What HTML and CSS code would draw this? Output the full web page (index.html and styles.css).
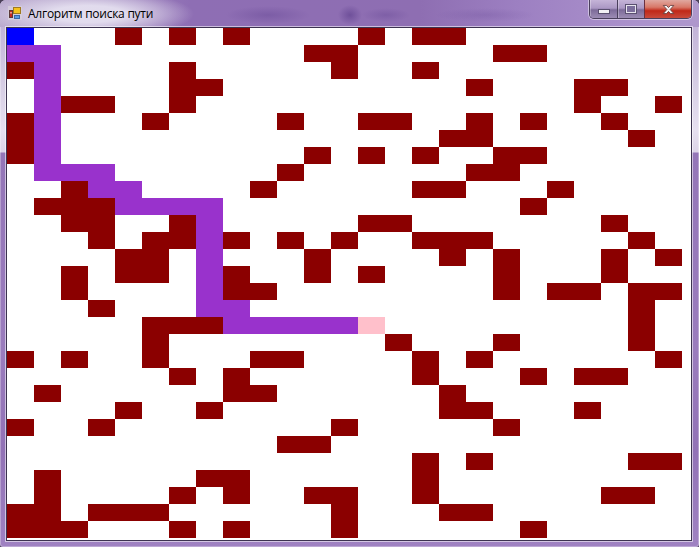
FILE: index.html
```html
<!DOCTYPE HTML>
<html lang="ru">
<head>
    <meta charset="utf-8">
    <title>Алгоритм поиска пути</title>
    <link rel="stylesheet" href="styles.css">
</head>
<body>
<div class="window">
    <div class="titlebar">
        <svg class="app-icon" width="14" height="14" viewBox="0 0 14 14">
            <rect x="0" y="0" width="14" height="14" fill="#d8d2dc" opacity="0.75"/>
            <rect x="1.500" y="4.500" width="3" height="7" fill="#c8281e" stroke="#5a3a3a"/>
            <rect x="2.300" y="6" width="1.400" height="1.500" fill="#f0d0c0"/>
            <rect x="5.500" y="1.500" width="7" height="6" fill="#f6c21a" stroke="#a07a20"/>
            <rect x="6.500" y="9.500" width="5" height="3" fill="#5c9be0" stroke="#3a68a8"/>
        </svg>
        <span class="caption">Алгоритм поиска пути</span>
        <div class="controls">
            <div class="btn btn-min"><span class="min-glyph"></span></div>
            <div class="btn btn-max"><span class="max-glyph"></span></div>
            <div class="btn btn-close">
                <svg width="13" height="11" viewBox="0 0 16 12">
                    <path d="M1.5 1h4l2.5 2.6L10.500 1h4l-4.500 5 4.500 5h-4L8 8.400 5.500 11h-4L6 6z" fill="#f8f4f4" stroke="#5c3a3a" stroke-width="1"/>
                </svg>
            </div>
        </div>
    </div>
    <div class="client">
        <div id="field" class="field"></div>
    </div>
</div>
<script src="grid.js"></script>
</body>
</html>
```

FILE: styles.css
```css
html, body{
    margin: 0;
    padding: 0;
    background: #4a4058;
}
.window{
    box-sizing: border-box;
    width: 699px;
    height: 547px;
    padding: 0 7px 6px 6px;
    border-radius: 6px 6px 3px 3px;
    overflow: hidden;
    background: linear-gradient(180deg, #b9a8d2 0, #d8d0e6 90px, #e6e0f0 130px, #dcd4e8 152px, #9476b8 153px, #9a7cbd 350px, #9272b6 450px, #9f82c2 547px);
    box-shadow: inset 0 0 0 1px rgba(255, 255, 255, .3);
}
.titlebar{
    display: flex;
    align-items: flex-start;
    height: 27px;
    margin: 0 -7px 0 -6px;
    background:
        radial-gradient(ellipse 42px 9px at 268px 15px, rgba(90, 60, 140, .35), transparent),
        radial-gradient(ellipse 12px 10px at 350px 15px, rgba(80, 50, 130, .5), transparent),
        radial-gradient(ellipse 24px 7px at 386px 15px, rgba(90, 60, 140, .3), transparent),
        radial-gradient(ellipse 50px 7px at 485px 15px, rgba(90, 60, 140, .2), transparent),
        radial-gradient(ellipse 106px 24px at 88px 14px, rgba(232, 228, 242, .9) 35%, rgba(232, 228, 242, .45) 70%, transparent),
        linear-gradient(90deg, #b8a8cc 0, #8e6eb4 190px, #8e6eb2 420px, #9d80c2 520px, #ab92cc 640px, #ae98cc 699px);
}
.app-icon{
    flex: none;
    margin: 6px 0 0 8px;
}
.caption{
    margin: 6px 0 0 6px;
    font: 12px/15px "Open Sans", "Noto Sans", sans-serif;
    letter-spacing: -.25px;
    color: #000;
    white-space: nowrap;
}
.controls{
    display: flex;
    margin-left: auto;
    margin-right: 7px;
    height: 18px;
    border: 1px solid #4a3f5c;
    border-top: 0;
    border-radius: 0 0 5px 5px;
    overflow: hidden;
    box-shadow: 0 0 0 1px rgba(255, 255, 255, .45);
}
.btn{
    display: flex;
    align-items: center;
    justify-content: center;
    height: 18px;
}
.btn-min, .btn-max{
    width: 27px;
    border-right: 1px solid #4a3f5c;
    box-shadow: inset 1px 0 0 rgba(255, 255, 255, .3);
    background: linear-gradient(180deg, #c5b4d8 0, #ab98c4 45%, #7c6a98 55%, #9c8cb4 100%);
}
.btn-max{
    width: 26px;
    border-right: 0;
}
.btn-close{
    width: 46px;
    border-left: 1px solid #6a3040;
    background: linear-gradient(180deg, #e0a8a0 0, #d87868 40%, #c02818 60%, #c84a3c 100%);
}
.min-glyph{
    box-sizing: border-box;
    width: 12px;
    height: 5px;
    margin-top: 4px;
    border: 1px solid #5a5070;
    background: #f2f0f4;
}
.max-glyph{
    box-sizing: border-box;
    width: 12px;
    height: 10px;
    margin-bottom: 1px;
    border: 2px solid #e8e4ee;
    outline: 1px solid #5a5070;
    outline-offset: -1px;
    background: #7c6e9c;
}
.client{
    border: 1px solid #3c3350;
    height: 512px;
    background: #fff;
    box-shadow: 0 0 0 1px rgba(255, 255, 255, .55);
}
.field{
    display: grid;
    grid-template-columns: repeat(25, 27px);
    grid-auto-rows: 17px;
}
.wall{
    background: #8b0000;
}
.path{
    background: #9932cc;
}
.start{
    background: #0000ff;
}
.finish{
    background: #ffc0cb;
}
```

FILE: grid.js
```js
var map = [
    'b...x.x.x....x.xx........',
    'pp.........xx.....xx.....',
    'xp....x.....x..x.........',
    '.p....xx.........x...xx..',
    '.pxx..x..............x..x',
    'xp...x....x..xx..x.x..x..',
    'xp..............xx.....x.',
    'xp.........x.x.x..xx.....',
    '.ppp......x......xx......',
    '..xpp....x.....xx...x....',
    '.xxxpppp...........x.....',
    '..xx..xp.....xx.......x..',
    '...x.xxpx.x.x..xxx.....x.',
    '....xx.p...x....x.x...x.x',
    '..x.xx.px..x.x....x...x..',
    '..x....pxx........x.xx.xx',
    '...x...pp..............x.',
    '.....xxxpppppe.........x.',
    '.....x........x...x....x.',
    'x.x..x...xx....x.x......x',
    '......x.x......x...x.xx..',
    '.x......xx......x........',
    '....x..x........xx...x...',
    'x..x........x.....x......',
    '..........xx.............',
    '...............x.x.....xx',
    '.x.....xx......x.........',
    '.x....x.x..xx..x......xx.',
    'xx.xxx......x...xx.......',
    'xxx...x.x...x......x.....'
];
var names = { x: 'wall', p: 'path', b: 'start', e: 'finish' };
var field = document.getElementById('field');

for ( var r=0; r<map.length; r++ ){
    for ( var c=0; c<map[r].length; c++ ){
        var cell = document.createElement('div');
        var name = names[map[r].charAt(c)];
        if ( name ) cell.className = name;
        field.appendChild(cell);
    }
}
```
